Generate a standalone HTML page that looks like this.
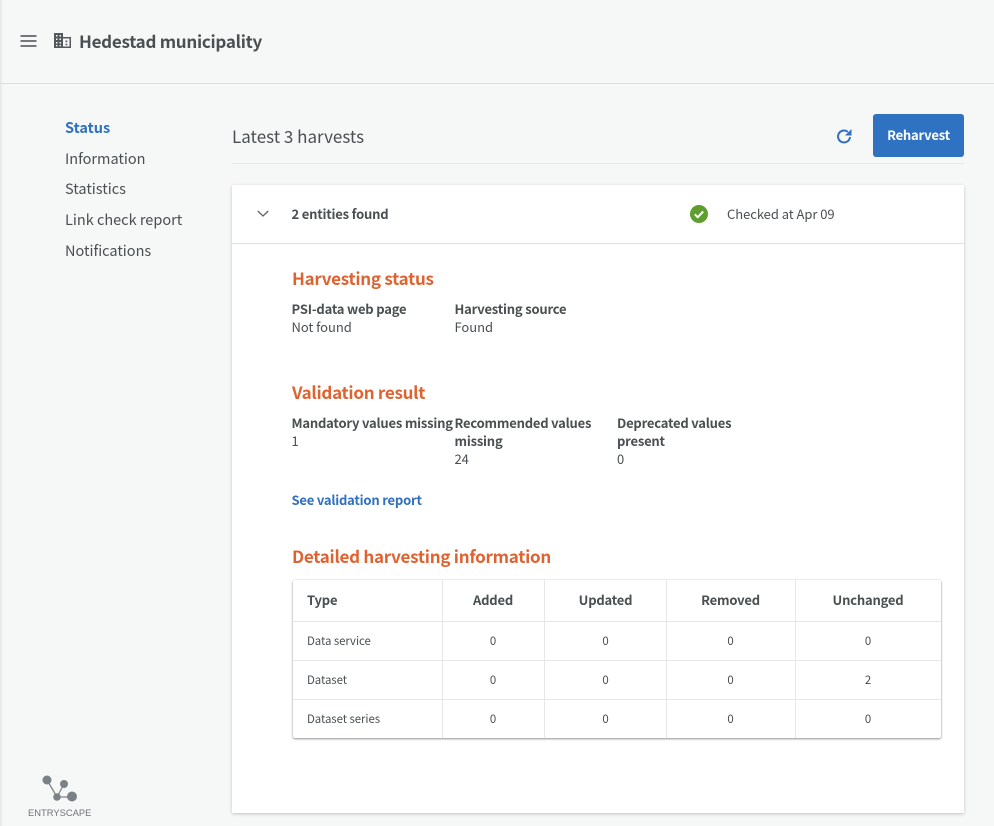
<!DOCTYPE html>
<html lang="en"><head><meta charset="utf-8"><title>Hedestad municipality</title>
<style>
html,body{margin:0;padding:0;width:994px;height:826px;overflow:hidden;background:#f6f7f7}
body{font-family:"Noto Sans CJK SC","Liberation Sans",sans-serif;color:#4a4f52;position:relative}
.t{position:absolute;white-space:nowrap;line-height:18px;font-size:13px;letter-spacing:-.05px}
.b{font-weight:700;letter-spacing:-.2px}
.h{color:#df6331;font-weight:700;font-size:17px;line-height:24px;letter-spacing:-.27px}
.c{text-align:center;transform:translateX(-50%)}
.n{font-size:14.5px;line-height:20px;left:65px;letter-spacing:0}
.r{font-size:11.4px}
.l{position:absolute;background:#e6e8e8}
</style></head><body>
<div style="position:absolute;left:0;top:0;width:3px;height:826px;background:linear-gradient(90deg,#e4e5e5,#f6f7f7)"></div>
<div class="l" style="left:0;top:83px;width:994px;height:1px;background:#dcdede"></div>
<svg style="position:absolute;left:20px;top:34px" width="17" height="14"><path d="M0.500 2h16M0.500 7h16M0.500 12h16" stroke="#4a4f52" stroke-width="1.400" fill="none"/></svg>
<svg style="position:absolute;left:53px;top:32px" width="19" height="17" viewBox="0 0 19 17"><path fill="#54595c" fill-rule="evenodd" d="M1 1h9v4h8v11H1zM3 3v1.500h1.500V3zM6.500 3v1.500H8V3zM3 6.500v1.500h1.500V6.500zM6.500 6.500v1.500H8V6.500zM3 10v1.500h1.500V10zM6.500 10v1.500H8V10zM3 13v1.300h1.500V13zM6.500 13v1.300H8V13zM10 6.500v8h6.500v-8zM12.500 8.500h1.800v1.800h-1.800zM12.500 11.700h1.800v1.500h-1.800z"/></svg>
<div class="t" style="left:79px;top:29px;font-size:17px;line-height:24px;font-weight:700;letter-spacing:-.28px">Hedestad municipality</div>

<div class="t n b" style="top:118px;color:#2f70c0;letter-spacing:0">Status</div>
<div class="t n" style="top:149px">Information</div>
<div class="t n" style="top:179px">Statistics</div>
<div class="t n" style="top:210px">Link check report</div>
<div class="t n" style="top:241px">Notifications</div>

<div class="t" style="left:232px;top:124px;font-size:17px;line-height:24px;letter-spacing:0">Latest 3 harvests</div>
<div class="l" style="left:232px;top:163px;width:732px;height:1px"></div>
<svg style="position:absolute;left:835px;top:127px" width="18" height="18" viewBox="0 0 18 18"><path d="M15 10A6 6 0 1 1 12.800 4.800" fill="none" stroke="#2f70c0" stroke-width="2"/><path d="M16.500 2v6.500H10z" fill="#2f70c0"/></svg>
<div style="position:absolute;left:873px;top:114px;width:91px;height:43px;background:#3072c2;border-radius:3px"></div>
<div class="t b c" style="left:918.500px;top:126px;color:#fff">Reharvest</div>

<div style="position:absolute;left:232px;top:185px;width:732px;height:628px;background:#fff;box-shadow:0 1px 3px rgba(0,0,0,.22)"></div>
<svg style="position:absolute;left:257px;top:210px" width="12" height="8"><path d="M0.800 1l5.200 5 5.200-5" fill="none" stroke="#5f6467" stroke-width="1.300"/></svg>
<div class="t b" style="left:291.500px;top:205px">2 entities found</div>
<svg style="position:absolute;left:690px;top:205px" width="18" height="18"><circle cx="9" cy="9" r="9" fill="#5f9e2e"/><path d="M4.800 9.300l2.900 2.900 5.500-5.700" fill="none" stroke="#fff" stroke-width="2"/></svg>
<div class="t" style="left:727px;top:205px">Checked at Apr 09</div>
<div class="l" style="left:232px;top:243px;width:732px;height:1px;background:#dfe1e1"></div>

<div class="t h" style="left:292px;top:266px">Harvesting status</div>
<div class="t b" style="left:291.500px;top:300px">PSI-data web page</div>
<div class="t" style="left:291.500px;top:318px">Not found</div>
<div class="t b" style="left:454.500px;top:300px">Harvesting source</div>
<div class="t" style="left:454.500px;top:318px">Found</div>

<div class="t h" style="left:292px;top:380px">Validation result</div>
<div class="t b" style="left:291.500px;top:414px">Mandatory values missing</div>
<div class="t" style="left:291.500px;top:432px">1</div>
<div class="t b" style="left:454.500px;top:414px">Recommended values<br>missing</div>
<div class="t" style="left:454.500px;top:450px">24</div>
<div class="t b" style="left:617px;top:414px">Deprecated values<br>present</div>
<div class="t" style="left:617px;top:450px">0</div>
<div class="t b" style="left:291.500px;top:491px;color:#2f70c0">See validation report</div>
<div class="t h" style="left:292px;top:544px">Detailed harvesting information</div>

<div style="position:absolute;left:293px;top:580px;width:648px;height:158px;background:#fff;border-radius:2px;box-shadow:0 1px 2px rgba(0,0,0,.4),0 0 2px rgba(0,0,0,.12)"></div>
<div class="l" style="left:293px;top:621px;width:648px;height:1px"></div>
<div class="l" style="left:293px;top:660px;width:648px;height:1px"></div>
<div class="l" style="left:293px;top:699px;width:648px;height:1px"></div>
<div class="l" style="left:442px;top:580px;width:1px;height:158px"></div>
<div class="l" style="left:544px;top:580px;width:1px;height:158px"></div>
<div class="l" style="left:666px;top:580px;width:1px;height:158px"></div>
<div class="l" style="left:795px;top:580px;width:1px;height:158px"></div>

<div class="t b" style="left:307px;top:591px">Type</div>
<div class="t b c" style="left:493px;top:591px">Added</div>
<div class="t b c" style="left:605.500px;top:591px">Updated</div>
<div class="t b c" style="left:730.500px;top:591px">Removed</div>
<div class="t b c" style="left:868px;top:591px">Unchanged</div>

<div class="t r" style="left:307px;top:632px">Data service</div>
<div class="t r c" style="left:493px;top:632px">0</div><div class="t r c" style="left:605.500px;top:632px">0</div><div class="t r c" style="left:730.500px;top:632px">0</div><div class="t r c" style="left:868px;top:632px">0</div>
<div class="t r" style="left:307px;top:671px">Dataset</div>
<div class="t r c" style="left:493px;top:671px">0</div><div class="t r c" style="left:605.500px;top:671px">0</div><div class="t r c" style="left:730.500px;top:671px">0</div><div class="t r c" style="left:868px;top:671px">2</div>
<div class="t r" style="left:307px;top:710px">Dataset series</div>
<div class="t r c" style="left:493px;top:710px">0</div><div class="t r c" style="left:605.500px;top:710px">0</div><div class="t r c" style="left:730.500px;top:710px">0</div><div class="t r c" style="left:868px;top:710px">0</div>

<svg style="position:absolute;left:40px;top:773px" width="40" height="32" viewBox="0 0 40 32"><path d="M7 7l10 17M17 24l7-13M17 24h15" stroke="#7f8589" stroke-width="1.300" fill="none"/><circle cx="7" cy="7" r="4.500" fill="#7b8286"/><circle cx="24" cy="11" r="4" fill="#7b8286"/><circle cx="17" cy="24" r="3.800" fill="#7b8286"/><circle cx="32" cy="23.500" r="5" fill="#7b8286"/></svg>
<div class="t" style="left:28px;top:805px;font-size:9.400px;line-height:16px;letter-spacing:0;color:#6f7579;font-family:'Liberation Sans',sans-serif">ENTRYSCAPE</div>
</body></html>
